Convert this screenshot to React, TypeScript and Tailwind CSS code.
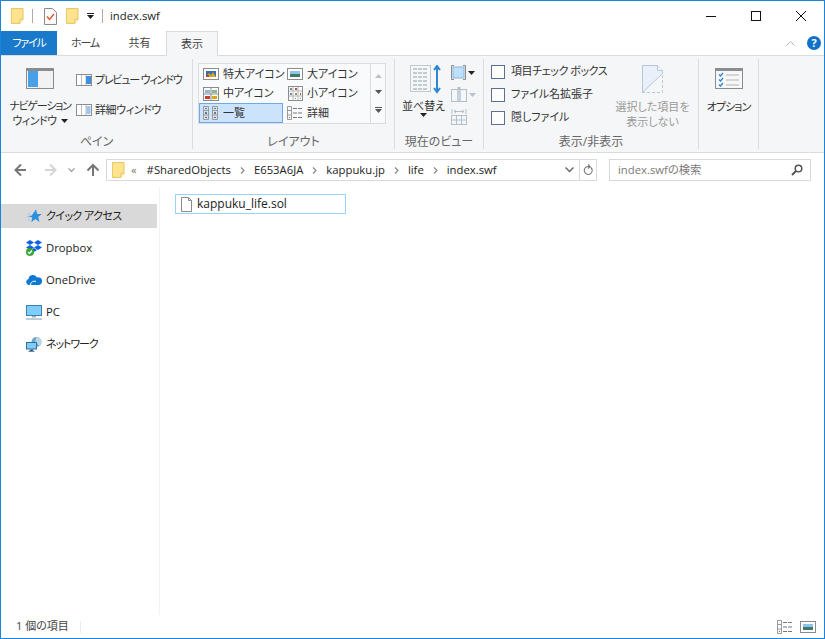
import type { ReactNode } from 'react'

const FONT = '[font-family:"Open_Sans","Noto_Sans_CJK_JP",sans-serif] [font-feature-settings:"palt"]'
const LATIN = 'text-[11.3px]'

// small drawings from the explorer chrome
const Folder = ({ className = '' }: { className?: string }) => (
  <svg width="13" height="16" viewBox="0 0 14 17" className={className}>
    <path d="M.5.5h12.5v11.5l-3.5 4.5H.5z" fill="#ffe38f" stroke="#e6c35c" />
    <path d="M9.5 16.5v-4.5H13" fill="#fff2c0" stroke="#e6c35c" />
  </svg>
)

const PageCheck = () => (
  <svg width="13" height="17" viewBox="0 0 13 17">
    <path d="M.5.5h8l4 4v12H.5z" fill="#fafafa" stroke="#8a8a8a" />
    <path d="M3 8.5l2.5 3L10 6" fill="none" stroke="#e2562b" strokeWidth="1.4" />
  </svg>
)

const PaneIcon = ({ side }: { side: 'nav' | 'preview' | 'detail' }) => {
  if (side === 'nav')
    return (
      <svg width="28" height="21" viewBox="0 0 28 21">
        <rect x=".5" y=".5" width="27" height="20" fill="#f2f2f2" stroke="#8c8c8c" />
        <rect x="1" y="1" width="26" height="2" fill="#8c8c8c" />
        <rect x="2" y="3" width="10" height="16" fill="#4aa0e6" />
      </svg>
    )
  return (
    <svg width="16" height="12" viewBox="0 0 16 12">
      <rect x=".5" y=".5" width="15" height="11" fill="#fff" stroke="#8c8c8c" />
      <path d="M5.5 1v10M10 1v10" stroke="#bbb" />
      {side === 'preview' ? (
        <rect x="10" y="2" width="5" height="8" fill="#3d8fe0" />
      ) : (
        <path d="M10.5 3h4M10.5 5h4M10.5 7h4M10.5 9h4" stroke="#3d8fe0" />
      )}
    </svg>
  )
}

const ThumbIcon = ({ kind }: { kind: 'xl' | 'l' | 'm' | 's' | 'list' | 'detail' }) => {
  if (kind === 'xl')
    return (
      <svg width="16" height="12" viewBox="0 0 16 12">
        <rect x=".5" y=".5" width="15" height="11" fill="#fff" stroke="#8c8c8c" />
        <rect x="3" y="3" width="10" height="6" fill="#2f6fb5" />
        <path d="M3 9l3-4 2 2 2-3 3 5z" fill="#d9a520" />
        <rect x="3" y="7" width="3" height="2" fill="#c8402a" />
      </svg>
    )
  if (kind === 'l')
    return (
      <svg width="16" height="12" viewBox="0 0 16 12">
        <rect x=".5" y=".5" width="15" height="11" fill="#fff" stroke="#8c8c8c" />
        <rect x="3" y="3" width="10" height="3" fill="#8cc4ef" />
        <rect x="3" y="6" width="10" height="3" fill="#3f7a66" />
      </svg>
    )
  if (kind === 'm')
    return (
      <svg width="16" height="14" viewBox="0 0 16 14">
        <rect x=".5" y=".5" width="15" height="13" fill="#fff" stroke="#8c8c8c" />
        <path d="M8 1v12M1 7h14" stroke="#8c8c8c" />
        <rect x="2" y="3" width="5" height="3" fill="#8cb8d8" />
        <rect x="9" y="3" width="5" height="3" fill="#8fb58a" />
        <rect x="2" y="9" width="5" height="3" fill="#c8402a" />
        <rect x="9" y="9" width="5" height="3" fill="#d9a520" />
      </svg>
    )
  if (kind === 's')
    return (
      <svg width="15" height="15" viewBox="0 0 15 15">
        <rect x=".5" y=".5" width="14" height="14" fill="#fff" stroke="#8c8c8c" />
        <path d="M5 1v13M10 1v13M1 5h13M1 10h13" stroke="#b5b5b5" />
        <path d="M2 2h2v2H2z" fill="#888" />
        <path d="M7 2h2v2H7zM12 7h1v2h-1z" fill="#b8503c" />
        <path d="M2 7h2v2H2zM7 12h1v1H7z" fill="#5f8fb5" />
        <path d="M7 7h2v2H7zM12 12h1v1h-1z" fill="#8a9a50" />
      </svg>
    )
  if (kind === 'list')
    return (
      <svg width="16" height="14" viewBox="0 0 16 14">
        <path d="M.5.5h5v13h-5zM9.5.5h5v13h-5zM.5 4.5h5M.5 9h5M9.5 4.5h5M9.5 9h5" fill="none" stroke="#9a9a9a" />
        <path d="M2 2h2v1H2zM2 6h2v2H2zM11 2h2v1h-2zM11 6h2v2h-2z" fill="#777" />
        <path d="M2 11h2v1H2zM11 11h2v1h-2z" fill="#b8503c" />
      </svg>
    )
  return (
    <svg width="16" height="14" viewBox="0 0 16 14">
      <path d="M.5.5h4v13h-4zM.5 4.5h4M.5 9h4" fill="none" stroke="#9a9a9a" />
      <path d="M6 2.5h4M11 2.5h4M6 7h4M11 7h4M6 11.5h4M11 11.5h4" stroke="#777" />
      <path d="M2 11h1v1H2z" fill="#b8503c" />
    </svg>
  )
}

const Caret = ({ color = '#222' }: { color?: string }) => (
  <svg width="7" height="4" viewBox="0 0 7 4">
    <path d="M0 0h7L3.5 4z" fill={color} />
  </svg>
)

const SortIcon = () => (
  <svg width="33" height="29" viewBox="0 0 33 29">
    <rect x=".5" y=".5" width="20" height="26" fill="#f4f6f7" stroke="#c4c8cc" />
    <path d="M3 4h15M3 8h15M3 12h15M3 16h15M3 20h15M3 24h15" stroke="#c1cbd2" strokeWidth="2" strokeDasharray="4 1" />
    <path d="M27 2v24" stroke="#2e86d0" strokeWidth="2" />
    <path d="M24 5l3-4 3 4M24 23l3 4 3-4" fill="none" stroke="#2e86d0" strokeWidth="2" />
  </svg>
)

const ViewIcon = ({ kind }: { kind: 'group' | 'add' | 'fit' }) => {
  if (kind === 'group')
    return (
      <svg width="15" height="15" viewBox="0 0 15 15">
        <rect x="2" y="2" width="11" height="11" fill="#bde0fb" stroke="#8fb4d8" />
        <path d="M3 .5H.5v14H3M12 .5h2.5v14H12" fill="none" stroke="#8c8c8c" />
      </svg>
    )
  if (kind === 'add')
    return (
      <svg width="16" height="15" viewBox="0 0 16 15">
        <rect x=".5" y="2.5" width="15" height="12" fill="#f4f6f7" stroke="#b4bfcc" />
        <rect x="6" y="3" width="4" height="11" fill="#c5d1dd" />
        <path d="M8 0v3" stroke="#b4bfcc" strokeWidth="3" />
      </svg>
    )
  return (
    <svg width="16" height="16" viewBox="0 0 16 16">
      <path d="M1 0v5M15 0v5M3 2.5h10M3 2.5l2-1.5M3 2.5l2 1.5M13 2.5l-2-1.5M13 2.5l-2 1.5" fill="none" stroke="#b4bfcc" />
      <rect x=".5" y="6.5" width="15" height="9" fill="#f4f6f7" stroke="#b4bfcc" />
      <path d="M1 11h14M5.5 7v8M10.5 7v8" stroke="#b4bfcc" />
    </svg>
  )
}

const HiddenPage = () => (
  <svg width="21" height="28" viewBox="0 0 21 28">
    <path d="M.5.5h15l5 5v3L.5 27.500z" fill="#e9f0fa" stroke="#b7c6dc" />
    <path d="M15.500.5v5h5" fill="#f5f6f7" stroke="#b7c6dc" />
    <path d="M20.5 10v17.500H1" fill="none" stroke="#b7c6dc" strokeDasharray="3 2" />
  </svg>
)

const OptionsIcon = () => (
  <svg width="28" height="21" viewBox="0 0 28 21">
    <rect x=".5" y=".5" width="27" height="20" fill="#f7f7f7" stroke="#8c8c8c" />
    <rect x="1" y="1" width="26" height="2" fill="#8c8c8c" />
    <path d="M4 6.5l1.5 1.5L8 5M4 11.5l1.5 1.5L8 10M4 16.5l1.5 1.5L8 15" fill="none" stroke="#2e86d0" strokeWidth="1.3" />
    <path d="M11 7h13M11 12h13M11 17h13" stroke="#b5b5b5" />
  </svg>
)

const Arrow = ({ dir, color }: { dir: 'left' | 'right' | 'up'; color: string }) => {
  const d = {
    left: 'M12 7H2M7 1.5L1.5 7 7 12.5',
    right: 'M1 7h10M6 1.5L11.5 7 6 12.5',
    up: 'M7 13V2M1.5 7.5L7 2l5.5 5.5',
  }[dir]
  return (
    <svg width="13" height="14" viewBox="0 0 13 14">
      <path d={d} fill="none" stroke={color} strokeWidth="2" />
    </svg>
  )
}

const Chevron = ({ size = 8, color = '#777' }: { size?: number; color?: string }) => (
  <svg width={size} height={size * 0.625} viewBox="0 0 8 5">
    <path d="M.5.5L4 4 7.5.5" fill="none" stroke={color} strokeWidth="1.3" />
  </svg>
)

const Crumb = () => (
  <svg width="5" height="7" viewBox="0 0 5 7">
    <path d="M1 .5L4 3.5 1 6.5" fill="none" stroke="#8a8a8a" strokeWidth="1.2" />
  </svg>
)

const NavIcon = ({ kind }: { kind: string }) => {
  if (kind === 'star')
    return (
      <svg width="15" height="15" viewBox="0 0 15 15">
        <path d="M9 .5l1.3 4.4 4.4.2-3.5 2.8 1.3 5.1L8.5 10l-4.2 3 1-4.5L.5 7l4-.3z" fill="#2b8fdc" />
        <path d="M.5 5h3M0 8h2M1 11h2" stroke="#9cc8ea" />
      </svg>
    )
  if (kind === 'dropbox')
    return (
      <svg width="16" height="16" viewBox="0 0 16 16">
        <path d="M4 0l4 2.5L4 5 0 2.5zM12 0l4 2.5L12 5 8 2.5zM4 5l4 2.5L4 10 0 7.5zM12 5l4 2.5L12 10 8 7.5zM8 8l3 2-3 2-3-2z" fill="#0f62e6" />
        <circle cx="4" cy="12" r="4" fill="#3aa335" />
        <path d="M2 12l1.5 1.5L6 10.5" fill="none" stroke="#fff" strokeWidth="1.3" />
      </svg>
    )
  if (kind === 'cloud')
    return (
      <svg width="16" height="10" viewBox="0 0 16 10">
        <path d="M3 10a3 3 0 01-.5-5.900A4.500 4.500 0 0111 2.500 3.700 3.700 0 0116 6.500 3.500 3.500 0 0113 10z" fill="#0f78d4" />
        <path d="M4.500 10c0-3 3-4.500 5.500-3.500" fill="none" stroke="#fff" />
      </svg>
    )
  if (kind === 'pc')
    return (
      <svg width="16" height="15" viewBox="0 0 16 15">
        <rect x=".5" y=".5" width="15" height="10" fill="#7fcdfb" stroke="#3f7fa8" />
        <path d="M6 11h4v1.500H6z" fill="#9ab4c4" />
        <path d="M0 14h16" stroke="#a9bcc8" strokeWidth="1.5" />
      </svg>
    )
  return (
    <svg width="16" height="15" viewBox="0 0 16 15">
      <circle cx="10.5" cy="5" r="5" fill="#6fa3c4" />
      <path d="M10.500 0a5 5 0 013 9L9 5z" fill="#b9d6e6" />
      <rect x=".5" y="5.500" width="10" height="6.500" fill="#7fcdfb" stroke="#2f6f9f" />
      <path d="M4 12.500h3V14H4zM2.500 14.500h6" stroke="#6a8ba3" />
    </svg>
  )
}

const Separator = () => <div className="mt-[3px] h-[90px] w-px shrink-0 bg-[#dcdcdc]" />

function Group({ label, width, children }: { label: string; width: string; children: ReactNode }) {
  return (
    <div className={`${width} flex h-full shrink-0 flex-col`}>
      <div className="min-h-0 flex-1">{children}</div>
      <div className="h-[19px] text-center text-xs leading-[18px] text-[#666]">{label}</div>
    </div>
  )
}

function GalleryItem({ kind, label, active }: { kind: 'xl' | 'l' | 'm' | 's' | 'list' | 'detail'; label: string; active?: boolean }) {
  return (
    <div className={`flex h-5 items-center gap-[4px] border pl-[3px] ${active ? 'border-[#6ea8e6] bg-[#cce4fb]' : 'border-transparent'}`}>
      <span className="flex w-[16px] shrink-0 justify-center"><ThumbIcon kind={kind} /></span>
      <span className="whitespace-nowrap">{label}</span>
    </div>
  )
}

function Check({ label, tight }: { label: string; tight?: boolean }) {
  return (
    <div className="flex h-[23px] items-center gap-[6px]">
      <span className="h-[14px] w-[14px] shrink-0 border border-[#5f6f8f] bg-[#fdfdfd]" />
      <span className={`whitespace-nowrap ${tight ? 'tracking-[-0.45px]' : ''}`}>{label}</span>
    </div>
  )
}

function Ribbon() {
  return (
    <div className="flex h-[98px] shrink-0 border-y border-[#dadbdc] bg-[#f5f6f7] text-[11px] text-[#333]">
      <Group label="ペイン" width="w-[191px]">
        <div className="flex pt-[12px]">
          <div className="flex w-[75px] flex-col items-center pl-[3px] text-center leading-[15px]">
            <PaneIcon side="nav" />
            <div className="mt-[9px] whitespace-nowrap tracking-[-1.2px]">ナビゲーション</div>
            <div className="flex items-center gap-1 whitespace-nowrap tracking-[-0.5px]">ウィンドウ<Caret /></div>
          </div>
          <div className="flex flex-col gap-[16px] pt-[5px]">
            <div className="flex h-[14px] items-center gap-[3px] whitespace-nowrap tracking-[-1.2px]"><PaneIcon side="preview" />プレビュー ウィンドウ</div>
            <div className="flex h-[14px] items-center gap-[3px] whitespace-nowrap tracking-[-0.4px]"><PaneIcon side="detail" />詳細ウィンドウ</div>
          </div>
        </div>
      </Group>
      <Separator />
      <Group label="レイアウト" width="w-[201px]">
        <div className="ml-[5px] mt-[7px] flex h-[61px] w-[188px] border border-[#dcdcdc] bg-[#f9fafb]">
          <div className="flex w-[84px] flex-col">
            <GalleryItem kind="xl" label="特大アイコン" />
            <GalleryItem kind="m" label="中アイコン" />
            <GalleryItem kind="list" label="一覧" active />
          </div>
          <div className="flex w-[87px] flex-col">
            <GalleryItem kind="l" label="大アイコン" />
            <GalleryItem kind="s" label="小アイコン" />
            <GalleryItem kind="detail" label="詳細" />
          </div>
          <div className="flex w-[15px] flex-col items-center justify-around border-l border-[#dcdcdc] py-1">
            <svg width="7" height="4" viewBox="0 0 7 4"><path d="M0 4h7L3.5 0z" fill="#c0c0c0" /></svg>
            <Caret color="#555" />
            <div className="flex flex-col items-center gap-px"><div className="h-px w-[7px] bg-[#555]" /><Caret color="#555" /></div>
          </div>
        </div>
      </Group>
      <Separator />
      <Group label="現在のビュー" width="w-[88px]">
        <div className="flex pl-[6px] pt-[9px]">
          <div className="flex w-[45px] flex-col items-center">
            <div className="pl-[6px]"><SortIcon /></div>
            <div className="mt-[4px] whitespace-nowrap leading-[15px]">並べ替え</div>
            <Caret />
          </div>
          <div className="flex flex-col gap-[7px] pl-[5px]">
            <div className="flex items-center gap-[2px]"><ViewIcon kind="group" /><Caret /></div>
            <div className="flex items-center gap-[2px]"><ViewIcon kind="add" /><Caret color="#b9c2cc" /></div>
            <ViewIcon kind="fit" />
          </div>
        </div>
      </Group>
      <Separator />
      <Group label="表示/非表示" width="w-[214px]">
        <div className="flex pl-[7px] pt-[4px]">
          <div className="w-[125px]">
            <Check label="項目チェック ボックス" tight />
            <Check label="ファイル名拡張子" />
            <Check label="隠しファイル" />
          </div>
          <div className="flex w-[73px] flex-col items-center pt-[5px] text-center leading-[15px] text-[#9a9a9a]">
            <HiddenPage />
            <div className="mt-[6px] whitespace-nowrap">選択した項目を</div>
            <div className="whitespace-nowrap">表示しない</div>
          </div>
        </div>
      </Group>
      <Separator />
      <Group label="" width="w-[59px]">
        <div className="flex flex-col items-center pt-[12px] leading-[15px]">
          <OptionsIcon />
          <div className="mt-[10px] whitespace-nowrap tracking-[-0.9px]">オプション</div>
        </div>
      </Group>
      <Separator />
    </div>
  )
}

function AddressBar() {
  return (
    <div className="flex h-[34px] shrink-0 items-center pl-[13px] pr-[12px] text-xs text-[#222]">
      <Arrow dir="left" color="#777" />
      <div className="ml-[17px]"><Arrow dir="right" color="#d5d5d5" /></div>
      <div className="ml-[11px]"><Chevron size={7} color="#999" /></div>
      <div className="ml-[11px]"><Arrow dir="up" color="#777" /></div>
      <div className={`${LATIN} ml-[7px] flex h-[22px] w-[491px] items-center border border-[#d9d9d9] bg-white pl-[5px]`}>
        <Folder />
        <span className="ml-[6px] text-[#777]">«</span>
        <span className="ml-[10px]">#SharedObjects</span>
        <span className="mx-[9px] flex"><Crumb /></span>
        <span>E653A6JA</span>
        <span className="mx-[9px] flex"><Crumb /></span>
        <span>kappuku.jp</span>
        <span className="mx-[9px] flex"><Crumb /></span>
        <span>life</span>
        <span className="mx-[9px] flex"><Crumb /></span>
        <span>index.swf</span>
        <span className="ml-auto mr-[5px] flex"><Chevron size={9} color="#666" /></span>
        <span className="flex h-full w-[17px] items-center justify-center border-l border-[#d9d9d9]">
          <svg width="10" height="12" viewBox="0 0 10 12">
            <path d="M7.500 3.200A4 4 0 115 2.500H6.500M5 .5l2 2-2 2" fill="none" stroke="#777" strokeWidth="1.1" />
          </svg>
        </span>
      </div>
      <div className={`${LATIN} ml-[12px] flex h-[22px] w-[202px] items-center justify-between border border-[#d9d9d9] bg-white pl-[8px] pr-[7px] text-[#7a7a7a]`}>
        <span>index.swfの検索</span>
        <svg width="12" height="12" viewBox="0 0 12 12">
          <circle cx="7.500" cy="4.500" r="3.300" fill="none" stroke="#555" strokeWidth="1.500" />
          <path d="M5 7L1 11" stroke="#555" strokeWidth="2" />
        </svg>
      </div>
    </div>
  )
}

function NavRow({ icon, label, active, className = '' }: { icon: string; label: string; active?: boolean; className?: string }) {
  return (
    <div className={`flex h-[24px] w-[156px] items-center pl-[25px] ${active ? 'bg-[#d9d9d9]' : ''}`}>
      <span className="flex w-[16px] justify-center"><NavIcon kind={icon} /></span>
      <span className={`ml-[4px] whitespace-nowrap ${className}`}>{label}</span>
    </div>
  )
}

export default function App() {
  return (
    <div className={`${FONT} flex h-[639px] w-[825px] flex-col overflow-hidden border border-[#1a84dc] bg-white`}>
      {/* title bar */}
      <div className="flex h-[30px] shrink-0 items-center pl-[10px] text-xs text-[#222]">
        <Folder />
        <div className="ml-[8px] h-[14px] w-px bg-[#aaa]" />
        <div className="ml-[11px] flex"><PageCheck /></div>
        <div className="ml-[9px] flex"><Folder /></div>
        <div className="ml-[8px] flex flex-col items-center gap-px">
          <div className="h-px w-[7px] bg-[#222]" />
          <Caret />
        </div>
        <div className="ml-[8px] h-[14px] w-px bg-[#aaa]" />
        <span className={`${LATIN} ml-[7px]`}>index.swf</span>
        <div className="ml-auto flex h-full items-center">
          <div className="flex w-[45px] justify-center"><div className="h-px w-[10px] bg-[#111]" /></div>
          <div className="flex w-[45px] justify-center"><div className="h-[10px] w-[10px] border border-[#111]" /></div>
          <div className="flex w-[46px] justify-center">
            <svg width="10" height="10" viewBox="0 0 10 10"><path d="M0 0l10 10M10 0L0 10" stroke="#111" /></svg>
          </div>
        </div>
      </div>

      {/* ribbon tabs */}
      <div className="flex h-[24px] shrink-0 text-[11px] text-[#444]">
        <div className="flex w-[56px] items-center justify-center bg-[#1979ca] tracking-[-1.2px] text-white">ファイル</div>
        <div className="flex w-[56px] items-center justify-center tracking-[-1.2px]">ホーム</div>
        <div className="flex w-[53px] items-center justify-center">共有</div>
        <div className="z-10 flex h-[25px] w-[52px] items-center justify-center border-x border-t border-[#dadbdc] bg-[#f5f6f7]">表示</div>
        <div className="ml-auto flex items-center gap-[12px] pr-[3px]">
          <svg width="9" height="5" viewBox="0 0 9 5"><path d="M.5 4.500L4.500.5l4 4" fill="none" stroke="#b0b0b0" /></svg>
          <div className="flex h-[14px] w-[14px] items-center justify-center rounded-full bg-[#0f72c8] text-[11px] font-bold text-white">?</div>
        </div>
      </div>

      <Ribbon />
      <AddressBar />

      {/* body */}
      <div className="flex min-h-0 flex-1 text-xs text-[#222]">
        <div className={`${LATIN} flex w-[159px] shrink-0 flex-col gap-[8px] border-r border-[#f2f2f2] pt-[17px]`}>
          <NavRow icon="star" label="クイック アクセス" active className="text-[11px] tracking-[-0.6px]" />
          <NavRow icon="dropbox" label="Dropbox" />
          <NavRow icon="cloud" label="OneDrive" />
          <NavRow icon="pc" label="PC" />
          <NavRow icon="network" label="ネットワーク" className="text-[11px] tracking-[-1.1px]" />
        </div>
        <div className="flex-1 pl-[15px] pt-[7px]">
          <div className="flex h-[20px] w-[171px] items-center gap-[5px] border border-[#99d1ff] pl-[5px]">
            <svg width="11" height="15" viewBox="0 0 11 15">
              <path d="M.5.5h7l3 3v11H.5z" fill="#fff" stroke="#8a8a8a" />
              <path d="M7.500.5v3h3" fill="none" stroke="#8a8a8a" />
            </svg>
            <span>kappuku_life.sol</span>
          </div>
        </div>
      </div>

      {/* status bar */}
      <div className="flex h-[23px] shrink-0 items-center text-[11px] text-[#444]">
        <span className="w-[79px] pl-[15px]">1 個の項目</span>
        <div className="h-[12px] w-px bg-[#ececec]" />
        <div className="ml-auto flex items-center gap-[7px] pr-[8px]">
          <ThumbIcon kind="detail" />
          <ThumbIcon kind="l" />
        </div>
      </div>
    </div>
  )
}
